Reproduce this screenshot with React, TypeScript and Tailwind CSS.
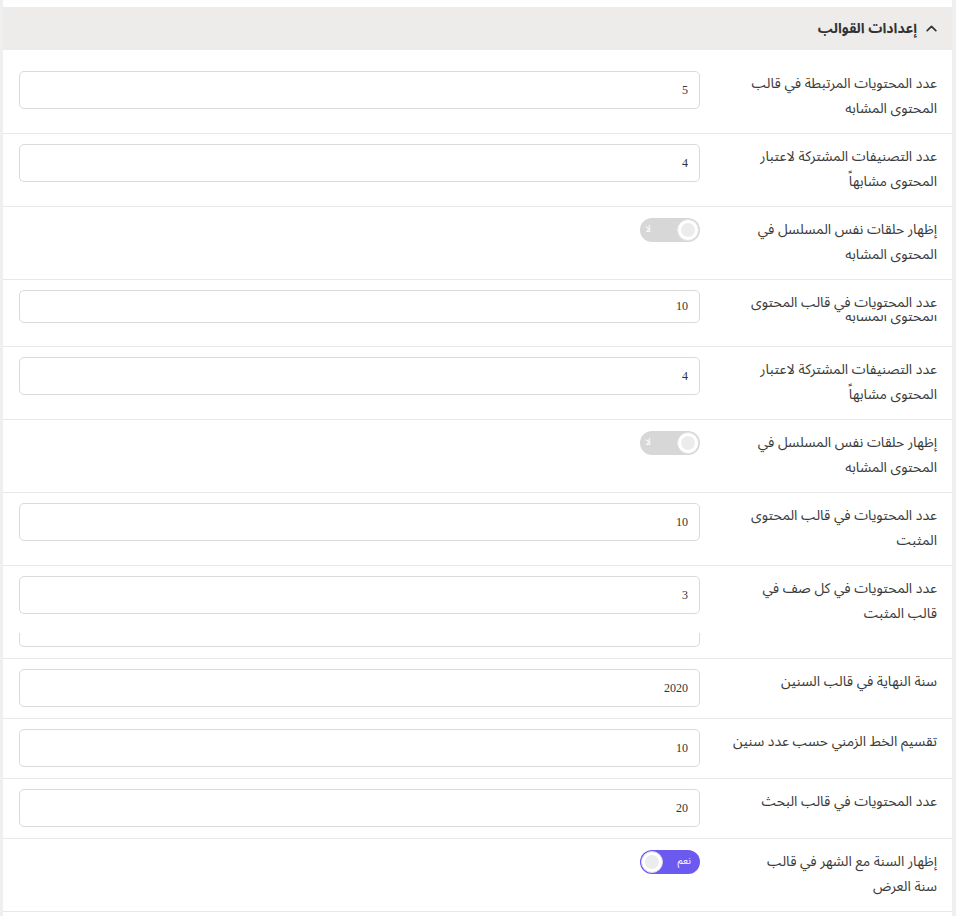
import React, { useState } from 'react';

type Row = {
  kind: 'input' | 'toggle';
  value?: string;
  on?: boolean;
  label: string[];
  h: string;
  pt?: string;
  clipLast?: boolean;
  extra?: boolean;
  short?: boolean;
};

const rows: Row[] = [
  { kind: 'input', value: '5', label: ['عدد المحتويات المرتبطة في قالب', 'المحتوى المشابه'], h: 'h-[84px]', pt: 'pt-[21px]' },
  { kind: 'input', value: '4', label: ['عدد التصنيفات المشتركة لاعتبار', 'المحتوى مشابهاً'], h: 'h-[73px]' },
  { kind: 'toggle', on: false, label: ['إظهار حلقات نفس المسلسل في', 'المحتوى المشابه'], h: 'h-[73px]' },
  { kind: 'input', value: '10', label: ['عدد المحتويات في قالب المحتوى', 'المحتوى المشابه'], h: 'h-[67px]', clipLast: true, short: true },
  { kind: 'input', value: '4', label: ['عدد التصنيفات المشتركة لاعتبار', 'المحتوى مشابهاً'], h: 'h-[73px]' },
  { kind: 'toggle', on: false, label: ['إظهار حلقات نفس المسلسل في', 'المحتوى المشابه'], h: 'h-[73px]' },
  { kind: 'input', value: '10', label: ['عدد المحتويات في قالب المحتوى', 'المثبت'], h: 'h-[73px]' },
  { kind: 'input', value: '3', label: ['عدد المحتويات في كل صف في', 'قالب المثبت'], h: 'h-[93px]', extra: true },
  { kind: 'input', value: '2020', label: ['سنة النهاية في قالب السنين'], h: 'h-[60px]' },
  { kind: 'input', value: '10', label: ['تقسيم الخط الزمني حسب عدد سنين'], h: 'h-[60px]' },
  { kind: 'input', value: '20', label: ['عدد المحتويات في قالب البحث'], h: 'h-[60px]' },
  { kind: 'toggle', on: true, label: ['إظهار السنة مع الشهر في قالب', 'سنة العرض'], h: 'h-[73px]' },
];

function Toggle({ initial }: { initial: boolean }) {
  const [on, setOn] = useState(initial);
  return (
    <button
      onClick={() => setOn(!on)}
      className={`relative mt-[1px] w-[60px] h-[24px] rounded-full ${on ? 'bg-[#6c5af0]' : 'bg-[#d7d7d7]'}`}
    >
      {on ? (
        <>
          <span className="absolute right-[9px] top-[4px] text-[10px] leading-[14px] text-white">نعم</span>
          <span className="absolute left-[1px] top-[1px] w-[22px] h-[22px] rounded-full bg-white border border-[#d8d8e8] flex items-center justify-center">
            <span className="w-[14px] h-[14px] rounded-full bg-[#ececec]" />
          </span>
        </>
      ) : (
        <>
          <span className="absolute left-[5px] top-[4px] text-[10px] leading-[14px] text-white">لا</span>
          <span className="absolute right-[1px] top-[1px] w-[22px] h-[22px] rounded-full bg-white border border-[#e4e4e4] flex items-center justify-center">
            <span className="w-[14px] h-[14px] rounded-full bg-[#ececec]" />
          </span>
        </>
      )}
    </button>
  );
}

function NumberBox({ value, short }: { value: string; short?: boolean }) {
  const [v, setV] = useState(value);
  return (
    <input
      value={v}
      onChange={(e) => setV(e.target.value)}
      className={`w-full ${short ? 'h-[33px]' : 'h-[38px]'} rounded-[5px] border border-[#dadada] bg-white px-[11px] text-right text-[12px] text-[#333] outline-none font-['Liberation_Serif',serif]`}
    />
  );
}

export default function App() {
  const [open, setOpen] = useState(true);

  return (
    <div className="min-h-[916px] bg-white border-l-[3px] border-r-[4px] border-[#efefef] pt-[7px] font-['Noto_Sans_Arabic','DejaVu_Sans',sans-serif]" dir="rtl">
      <button
        onClick={() => setOpen(!open)}
        className="w-full h-[43px] bg-[#edecea] flex items-center gap-[8px] pr-[14px]"
      >
        <svg width="13" height="13" viewBox="0 0 12 12" fill="none" stroke="#333" strokeWidth="1.6" strokeLinecap="round" strokeLinejoin="round">
          <path d="M2 8 L6 4 L10 8" />
        </svg>
        <span className="text-[14px] font-bold text-[#333]">إعدادات القوالب</span>
      </button>

      {open && (
        <div>
          {rows.map((r, i) => (
            <div key={i} className={`flex ${r.h} ${r.pt ?? 'pt-[10px]'} border-b border-[#e8e8e8]`}>
              <div className="w-[237px] shrink-0 px-[15px] text-[14px] leading-[25px] text-[#3a3a3a]">
                {r.label.map((line, j) =>
                  r.clipLast && j === r.label.length - 1 ? (
                    <div key={j} className="h-[14px] overflow-hidden">
                      <div className="-mt-[11px] whitespace-nowrap">{line}</div>
                    </div>
                  ) : (
                    <div key={j} className="whitespace-nowrap">{line}</div>
                  )
                )}
              </div>
              <div className="flex-1 pr-[15px] pl-[16px]">
                {r.kind === 'input' ? (
                  <>
                    <NumberBox value={r.value ?? ''} short={r.short} />
                    {r.extra && (
                      <div className="mt-[19px] h-[14px] rounded-b-[5px] border-x border-b border-[#dadada]" />
                    )}
                  </>
                ) : (
                  <div className="flex justify-start">
                    <Toggle initial={!!r.on} />
                  </div>
                )}
              </div>
            </div>
          ))}
        </div>
      )}
    </div>
  );
}
